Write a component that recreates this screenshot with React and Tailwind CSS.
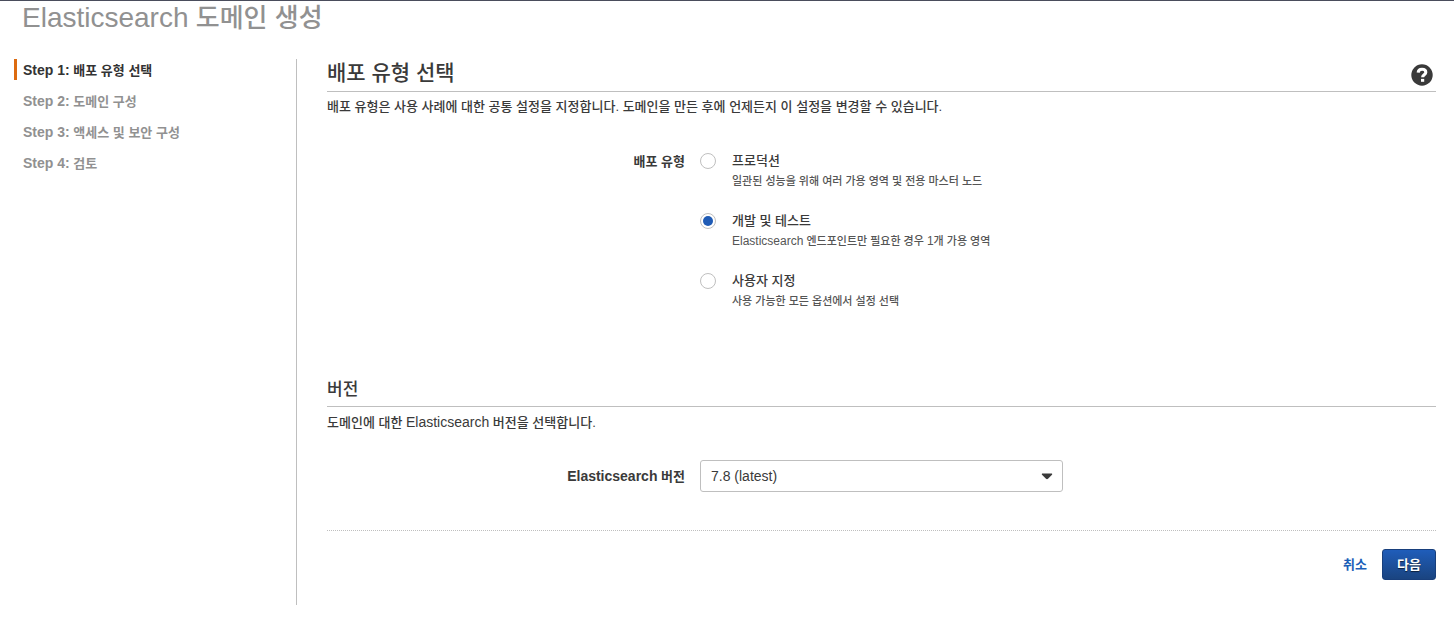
const STEPS = [
  { number: 1, name: '배포 유형 선택', active: true },
  { number: 2, name: '도메인 구성' },
  { number: 3, name: '액세스 및 보안 구성' },
  { number: 4, name: '검토' },
];

const TYPES = [
  { id: 'production', name: '프로덕션', hint: '일관된 성능을 위해 여러 가용 영역 및 전용 마스터 노드' },
  {
    id: 'development',
    name: '개발 및 테스트',
    hint: (
      <>
        <span className="text-[12px]">Elasticsearch</span> 엔드포인트만 필요한 경우 <span className="text-[12px]">1</span>개 가용 영역
      </>
    ),
  },
  { id: 'custom', name: '사용자 지정', hint: '사용 가능한 모든 옵션에서 설정 선택' },
];

function StepList() {
  return (
    <nav className="w-[283px] shrink-0 border-r border-[#bfbfbf]">
      <ol className="flex flex-col gap-[10px]">
        {STEPS.map((step) => (
          <li
            key={step.number}
            aria-current={step.active ? 'step' : undefined}
            className={
              step.active
                ? 'border-l-3 border-[#dd6b10] pt-[2px] pl-[6px] text-[13px] leading-[19px] font-bold text-[#333]'
                : 'border-l-3 border-transparent pt-[2px] pl-[6px] text-[13px] leading-[19px] font-bold text-[#919191]'
            }
          >
            <span className="text-[14px]">Step {step.number}:</span> {step.name}
          </li>
        ))}
      </ol>
    </nav>
  );
}

function HelpIcon() {
  return (
    <svg viewBox="0 0 22 22" className="size-[22px]" aria-hidden="true">
      <circle cx="11" cy="11" r="10.7" fill="#3a3a3a" />
      <path d="M7.2 8.6C7.3 6.2 8.9 5.3 11 5.300s3.800 1 3.800 3c0 2.500-3.200 2.400-3.200 5" fill="none" stroke="#fff" strokeWidth="3.100" />
      <rect x="10" y="14.900" width="3.200" height="2.900" fill="#fff" />
    </svg>
  );
}

function DeploymentType() {
  return (
    <section>
      <div className="flex items-start justify-between border-b border-[#bfbfbf] pb-[4px]">
        <h2 className="text-[21px] leading-[28px]">배포 유형 선택</h2>
        <button type="button" aria-label="도움말" className="mt-[5px] mr-[3px]">
          <HelpIcon />
        </button>
      </div>
      <p className="mt-[5px] text-[13px] leading-[20px]">
        배포 유형은 사용 사례에 대한 공통 설정을 지정합니다. 도메인을 만든 후에 언제든지 이 설정을 변경할 수 있습니다.
      </p>
      <div role="radiogroup" aria-labelledby="type-label" className="mt-[34px] grid grid-cols-3 gap-x-[10px]">
        <div id="type-label" className="pr-[5px] text-right text-[13px] leading-[22px] font-bold">
          배포 유형
        </div>
        <div className="flex flex-col gap-[20px]">
          {TYPES.map((type) => (
            <label key={type.id} className="flex items-start gap-[16px]">
              <input
                type="radio"
                name="type"
                value={type.id}
                defaultChecked={type.id === 'development'}
                className="mt-[2px] size-[16px] shrink-0 appearance-none rounded-full border border-[#bfbfbf] bg-white bg-clip-content p-[2px] checked:bg-[#1f5bb5]"
              />
              <span className="flex flex-col text-[13px] leading-[20px]">
                <span>{type.name}</span>
                <span className="text-[11px] text-[#555]">{type.hint}</span>
              </span>
            </label>
          ))}
        </div>
      </div>
    </section>
  );
}

function Version() {
  return (
    <section className="mt-[66px]">
      <h3 className="border-b border-[#bfbfbf] pb-[3px] text-[17px] leading-[26px]">버전</h3>
      <p className="mt-[5px] text-[13px] leading-[20px]">
        도메인에 대한 <span className="text-[14px]">Elasticsearch</span> 버전을 선택합니다.
      </p>
      <div className="mt-[27px] grid grid-cols-3 items-center gap-x-[10px]">
        <label htmlFor="version" className="pr-[5px] text-right text-[13px] leading-[20px] font-bold">
          <span className="text-[14px]">Elasticsearch</span> 버전
        </label>
        <div className="relative">
          <select
            id="version"
            className="h-[32px] w-full appearance-none rounded-[3px] border border-[#bfbfbf] bg-white px-[10px] text-[14px]"
          >
            <option>7.8 (latest)</option>
          </select>
          <svg viewBox="0 0 12 7" className="pointer-events-none absolute top-[13px] right-[10px] h-[7px] w-[12px]" aria-hidden="true">
            <path d="M1.500 0.500h9c.7 0 1 .7.500 1.200L7 5.700c-.6.6-1.400.6-2 0L1 1.700C.5 1.200.8.5 1.500.5z" fill="#3a3a3a" />
          </svg>
        </div>
      </div>
    </section>
  );
}

export default function App() {
  return (
    <div className="border-t border-[#4a4d5c] bg-white pr-[18px] pb-[21px] pl-[14px] font-['Liberation_Sans','Noto_Sans_CJK_KR',sans-serif] font-medium text-[#3a3a3a]">
      <h1 className="pl-[8px] text-[26px] leading-[34px] text-[#919191]">
        <span className="text-[28px]">Elasticsearch</span> 도메인 생성
      </h1>
      <div className="mt-[24px] flex items-stretch">
        <StepList />
        <main className="min-w-0 flex-1 pb-[25px] pl-[30px]">
          <DeploymentType />
          <Version />
          <div className="mt-[38px] flex items-center justify-end gap-[15px] border-t border-dotted border-[#bfbfbf] pt-[18px] text-[13px] font-bold">
            <a href="#cancel" className="text-[#1b5fb8]">
              취소
            </a>
            <button
              type="button"
              className="h-[31px] w-[54px] rounded-[3px] border border-[#183f7c] bg-linear-to-b from-[#1f5dba] to-[#1a4480] text-white text-shadow-[0_1px_1px_rgb(0_0_0/0.6)]"
            >
              다음
            </button>
          </div>
        </main>
      </div>
    </div>
  );
}
